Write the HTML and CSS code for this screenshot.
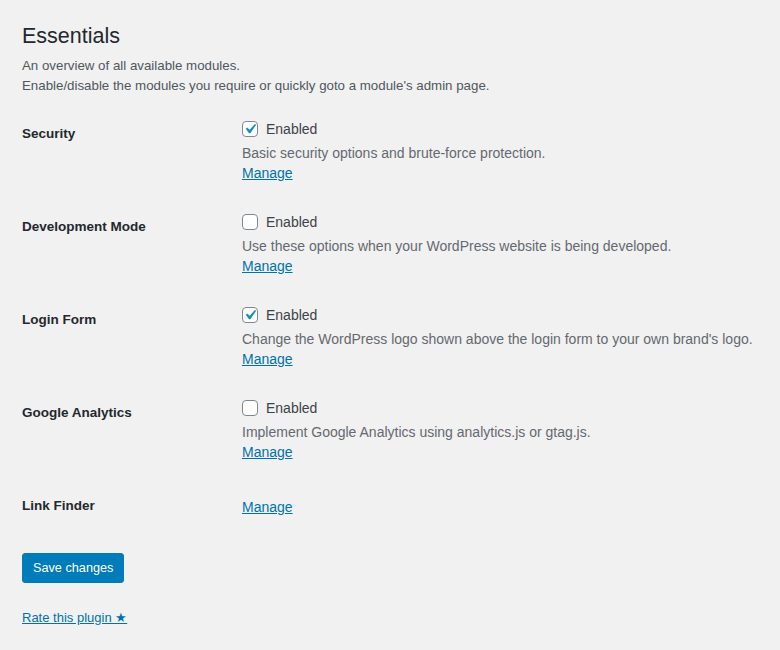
FILE: index.html
```html
<!DOCTYPE html>
<html lang="en">
<head>
<meta charset="utf-8">
<title>Essentials</title>
<link rel="stylesheet" href="styles.css">
</head>
<body>
<div class="wrap">
  <h1 class="title">Essentials</h1>
  <p class="intro">An overview of all available modules.<br>Enable/disable the modules you require or quickly goto a module's admin page.</p>

  <div class="form-table">
    <div class="row">
      <div class="th">Security</div>
      <div class="td">
        <label class="check"><span class="box checked"><svg viewBox="0 0 20 20" width="20" height="20"><path d="M14.83 4.89l1.34.94-5.81 8.38H9.02L5.78 9.67l1.34-1.25 2.57 2.4z" fill="#1e8cbe"/></svg></span>Enabled</label>
        <p class="description">Basic security options and brute-force protection.</p>
        <a class="link" href="#">Manage</a>
      </div>
    </div>
    <div class="row">
      <div class="th">Development Mode</div>
      <div class="td">
        <label class="check"><span class="box"></span>Enabled</label>
        <p class="description">Use these options when your WordPress website is being developed.</p>
        <a class="link" href="#">Manage</a>
      </div>
    </div>
    <div class="row">
      <div class="th">Login Form</div>
      <div class="td">
        <label class="check"><span class="box checked"><svg viewBox="0 0 20 20" width="20" height="20"><path d="M14.83 4.89l1.34.94-5.81 8.38H9.02L5.78 9.67l1.34-1.25 2.57 2.4z" fill="#1e8cbe"/></svg></span>Enabled</label>
        <p class="description">Change the WordPress logo shown above the login form to your own brand's logo.</p>
        <a class="link" href="#">Manage</a>
      </div>
    </div>
    <div class="row">
      <div class="th">Google Analytics</div>
      <div class="td">
        <label class="check"><span class="box"></span>Enabled</label>
        <p class="description">Implement Google Analytics using analytics.js or gtag.js.</p>
        <a class="link" href="#">Manage</a>
      </div>
    </div>
    <div class="row row-short">
      <div class="th">Link Finder</div>
      <div class="td">
        <a class="link" href="#">Manage</a>
      </div>
    </div>
  </div>

  <div class="submit">
    <button class="button-primary" type="button">Save changes</button>
  </div>
  <a class="link rate" href="#">Rate this plugin ★</a>
</div>
</body>
</html>
```

FILE: styles.css
```css
html, body {
  margin: 0;
  padding: 0;
  background: #f1f1f1;
}
body {
  font-family: "Liberation Sans", Arial, sans-serif;
  font-size: 13px;
  line-height: 1.4em;
  color: #444;
}
.wrap {
  padding: 0 22px;
}
.title {
  margin: 0;
  padding: 22px 0 4px;
  font-size: 21.5px;
  font-weight: 400;
  line-height: 29px;
  color: #23282d;
}
.intro {
  margin: 1px 0 0;
  font-size: 13.3px;
  line-height: 20px;
  color: #50575e;
}
.form-table {
  margin-top: 9px;
  display: flex;
  flex-direction: column;
}
.row {
  display: flex;
  height: 93px;
}
.row-short {
  height: 58px;
}
.th {
  flex: 0 0 200px;
  padding: 20px 10px 0 0;
  font-size: 13.5px;
  font-weight: 700;
  line-height: 18px;
  color: #23282d;
}
.td {
  flex: 1 1 auto;
  min-width: 0;
  padding: 15px 0 0 10px;
  display: flex;
  flex-direction: column;
  align-items: flex-start;
}
.row-short .td {
  padding-top: 20px;
}
.check {
  display: flex;
  align-items: center;
  height: 18px;
  color: #3c434a;
  font-size: 14px;
}
.box {
  width: 16px;
  height: 16px;
  box-sizing: border-box;
  border: 1px solid #7e8993;
  border-radius: 4px;
  background: #fff;
  margin-right: 8px;
  position: relative;
  display: inline-block;
  flex: 0 0 16px;
}
.box svg {
  position: absolute;
  left: -3px;
  top: -3px;
}
.description {
  margin: 5px 0 0;
  line-height: 20px;
  font-size: 14px;
  color: #646970;
  white-space: nowrap;
}
.link {
  color: #0073aa;
  text-decoration: underline;
  line-height: 20px;
  font-size: 14px;
}
.submit {
  margin-top: 18px;
}
.button-primary {
  display: inline-block;
  height: 30px;
  padding: 0 10px;
  border: 1px solid #007cba;
  border-radius: 3px;
  background: #007cba;
  color: #fff;
  font-family: inherit;
  font-size: 12.7px;
  line-height: 28px;
  cursor: pointer;
}
.rate {
  display: inline-block;
  margin-top: 25px;
  font-size: 13px;
}
```
